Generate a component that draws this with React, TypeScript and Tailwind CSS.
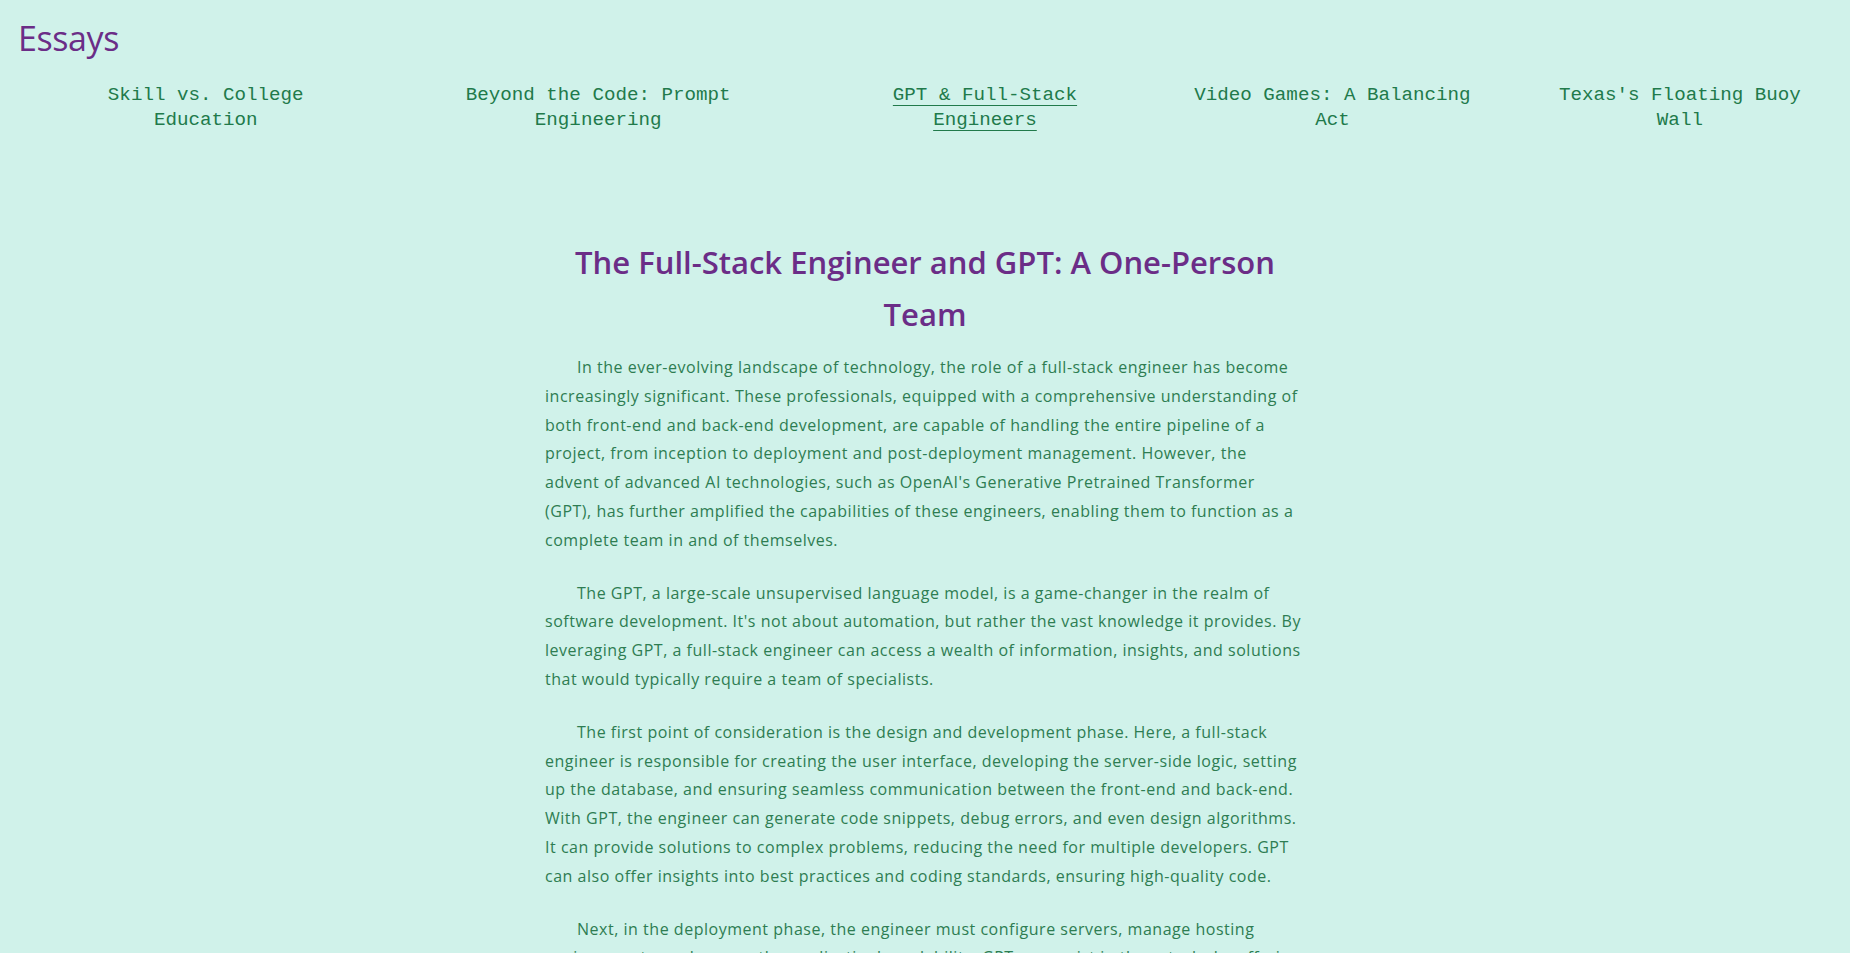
const essays = [
  { title: "Skill vs. College Education", active: false },
  { title: "Beyond the Code: Prompt Engineering", active: false },
  { title: "GPT & Full-Stack Engineers", active: true },
  { title: "Video Games: A Balancing Act", active: false },
  { title: "Texas's Floating Buoy Wall", active: false },
]

const paragraphs = [
  "In the ever-evolving landscape of technology, the role of a full-stack engineer has become increasingly significant. These professionals, equipped with a comprehensive understanding of both front-end and back-end development, are capable of handling the entire pipeline of a project, from inception to deployment and post-deployment management. However, the advent of advanced AI technologies, such as OpenAI's Generative Pretrained Transformer (GPT), has further amplified the capabilities of these engineers, enabling them to function as a complete team in and of themselves.",
  "The GPT, a large-scale unsupervised language model, is a game-changer in the realm of software development. It's not about automation, but rather the vast knowledge it provides. By leveraging GPT, a full-stack engineer can access a wealth of information, insights, and solutions that would typically require a team of specialists.",
  "The first point of consideration is the design and development phase. Here, a full-stack engineer is responsible for creating the user interface, developing the server-side logic, setting up the database, and ensuring seamless communication between the front-end and back-end. With GPT, the engineer can generate code snippets, debug errors, and even design algorithms. It can provide solutions to complex problems, reducing the need for multiple developers. GPT can also offer insights into best practices and coding standards, ensuring high-quality code.",
  "Next, in the deployment phase, the engineer must configure servers, manage hosting environments, and ensure the application's scalability. GPT can assist in these tasks by offering guidance on server configuration, cloud services, and deployment pipelines, making the process smoother and more efficient.",
  "Finally, in the post-deployment phase, the engineer must monitor the application, fix bugs, and roll out updates. GPT can help identify the root cause of issues and suggest fixes, acting as an ever-available teammate.",
]

export default function App() {
  return (
    <div className="min-h-screen bg-[#d0f2ea]">
      <header className="pt-[21px]">
        <h1 className="pl-[18px] text-[34px] leading-none tracking-[-0.4px] text-[#6b2d87] font-['Open_Sans',sans-serif]">
          Essays
        </h1>
        <nav className="mt-[28px] flex pl-8 pr-[2px] font-['Liberation_Mono',monospace] text-[19.2px] leading-[25px] text-[#217a4b]">
          {essays.map((essay) => (
            <a
              key={essay.title}
              href="#"
              className={
                "px-[22px] text-center " +
                (essay.active ? "underline underline-offset-[5px] decoration-1" : "no-underline")
              }
            >
              {essay.title}
            </a>
          ))}
        </nav>
      </header>

      <main className="mx-auto mt-[103px] w-[760px] pb-16">
        <h2 className="mb-[13px] text-center text-[31px] leading-[52px] font-semibold text-[#6b2d87] font-['Open_Sans',sans-serif]">
          The Full-Stack Engineer and GPT: A One-Person Team
        </h2>
        <div className="font-['Open_Sans',sans-serif] text-[16px] leading-[28.8px] tracking-[0.52px] text-[#2e7d52]">
          {paragraphs.map((p, i) => (
            <p key={i} className="mb-6 indent-8">
              {p}
            </p>
          ))}
        </div>
      </main>
    </div>
  )
}
